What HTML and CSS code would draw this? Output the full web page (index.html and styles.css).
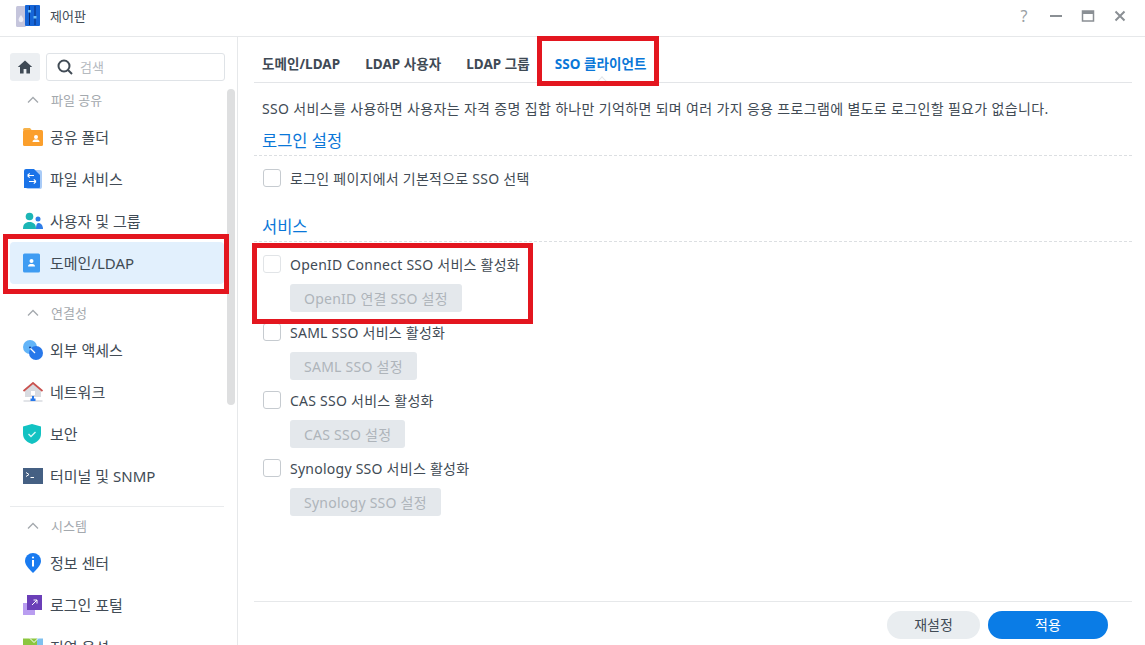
FILE: index.html
```html
<!DOCTYPE html>
<html lang="ko">
<head>
<meta charset="utf-8">
<title>제어판</title>
<link rel="stylesheet" href="styles.css">
</head>
<body>
<div class="window">
  <header class="titlebar">
    <svg class="app-icon" viewBox="0 0 24 22" width="24" height="22">
      <rect x="0" y="1" width="10" height="21" rx="1.5" fill="#c5c5dc"/>
      <path d="M5 10c1.6 2.2 2.4 3.4 2.4 4.8a2.4 2.4 0 0 1-4.800 0C2.600 13.400 3.400 12.200 5 10z" fill="#eeeef6"/>
      <rect x="9" y="0" width="15" height="21" rx="1" fill="#1565d8"/>
      <path d="M13.500 1v19M19 1v19" stroke="#0a2f78" stroke-width="1"/>
      <rect x="12" y="5" width="3" height="2.500" fill="#6fc0f5"/>
      <rect x="17.500" y="11" width="3" height="2.500" fill="#6fc0f5"/>
    </svg>
    <span class="app-title">제어판</span>
    <div class="win-controls">
      <span class="win-help">?</span>
      <svg viewBox="0 0 14 14" width="14" height="14"><path d="M1 7h12" stroke="#8a8f94" stroke-width="2"/></svg>
      <svg viewBox="0 0 14 14" width="14" height="14"><path d="M1.500 2h11v10h-11z" fill="none" stroke="#8a8f94" stroke-width="1.500"/><path d="M1 3.500h12" stroke="#8a8f94" stroke-width="3"/></svg>
      <svg viewBox="0 0 14 14" width="14" height="14"><path d="M2.500 2.500l9 9M11.500 2.500l-9 9" stroke="#8a8f94" stroke-width="2"/></svg>
    </div>
  </header>
  <div class="body">
    <aside class="sidebar">
      <div class="search-row">
        <button class="home-btn">
          <svg viewBox="0 0 16 16" width="16" height="16"><path d="M8 1.500L0.800 8H3v6.500h3.600V10h2.800v4.500H13V8h2.200z" fill="#3f4a55"/></svg>
        </button>
        <div class="search">
          <svg viewBox="0 0 16 16" width="16" height="16"><circle cx="7" cy="7" r="5.500" fill="none" stroke="#414b55" stroke-width="2"/><path d="M11 11l4 4" stroke="#414b55" stroke-width="2"/></svg>
          <span class="search-text">검색</span>
        </div>
      </div>
      <div class="nav">
        <section class="group">
          <div class="group-head"><svg class="chev" viewBox="0 0 12 8" width="12" height="8"><path d="M1 6.500l5-5 5 5" fill="none" stroke="#a4a9ae" stroke-width="1.300"/></svg>파일 공유</div>
          <div class="item"><svg class="ico" viewBox="0 0 20 18" width="20" height="18"><path d="M0 1.500A1.500 1.500 0 0 1 1.500 0H7l2 2.500H0z" fill="#f7b24a"/><rect y="2" width="20" height="16" rx="1.500" fill="#fb9f2c"/><circle cx="13" cy="9" r="2" fill="#fff"/><path d="M9.500 14c0-2 1.500-2.500 3.500-2.500s3.500.5 3.500 2.500z" fill="#fff"/></svg>공유 폴더</div>
          <div class="item"><svg class="ico" viewBox="0 0 20 20" width="20" height="20"><rect x="3" y="1" width="16" height="19" rx="2" fill="#a9cbf7"/><path d="M1 2a2 2 0 0 1 2-2h8l6 6v12a1 1 0 0 1-1 1H1z" fill="#1a73e8"/><path d="M11 6.500H4.500M4.500 6.500l2.200-2.200M4.500 6.500l2.200 2.200M6 12.500h7M13 12.500l-2.200-2.200M13 12.500l-2.200 2.200" fill="none" stroke="#fff" stroke-width="1.100"/></svg>파일 서비스</div>
          <div class="item"><svg class="ico" viewBox="0 0 20 18" width="20" height="18"><circle cx="6.500" cy="4.500" r="3.800" fill="#1cb5b5"/><path d="M0 17c0-5 2.500-7 6.500-7s6.500 2 6.500 7z" fill="#1cb5b5"/><circle cx="15" cy="7" r="2.500" fill="#2f7de8"/><path d="M13 17c0-3 .5-6 2.500-6S20 13 20 17z" fill="#2f7de8"/></svg>사용자 및 그룹</div>
          <div class="item active"><svg class="ico" viewBox="0 0 18 20" width="18" height="20"><rect width="17" height="19" y="0.500" rx="1.500" fill="#3f9cf2"/><circle cx="8.500" cy="8" r="2" fill="#fff"/><path d="M5 13.500c0-2 1.500-2.500 3.500-2.500s3.500.5 3.500 2.500z" fill="#fff"/></svg>도메인/LDAP</div>
        </section>
        <section class="group">
          <div class="group-head"><svg class="chev" viewBox="0 0 12 8" width="12" height="8"><path d="M1 6.500l5-5 5 5" fill="none" stroke="#a4a9ae" stroke-width="1.300"/></svg>연결성</div>
          <div class="item"><svg class="ico" viewBox="0 0 20 20" width="20" height="20"><circle cx="7" cy="7" r="7" fill="#62b4f8"/><circle cx="13" cy="13" r="7" fill="#2878ea"/><path d="M7 8l5 5" stroke="#fff" stroke-width="1.200"/><circle cx="7" cy="7.500" r="1" fill="#0e3f8f"/></svg>외부 액세스</div>
          <div class="item"><svg class="ico" viewBox="0 0 20 20" width="20" height="20"><path d="M2 8.500V15h16V8.500L10 2z" fill="#d9dbe0"/><path d="M0.500 9L10 1l9.500 8" fill="none" stroke="#c9524f" stroke-width="1.800"/><rect x="8" y="9" width="4" height="4" fill="#fff"/><path d="M10 14v3" stroke="#2878ea" stroke-width="2"/><path d="M0.500 19h19" stroke="#d9dbe0" stroke-width="1.500"/><rect x="7.500" y="16.500" width="5" height="2.500" fill="#2878ea"/></svg>네트워크</div>
          <div class="item"><svg class="ico" viewBox="0 0 18 20" width="18" height="20"><path d="M9 0l9 2.500V10c0 5-4 8.500-9 10-5-1.500-9-5-9-10V2.500z" fill="#12c2c2"/><path d="M5.500 10l2.500 2.500 4.500-4.500" fill="none" stroke="#d8f7f7" stroke-width="1.400"/></svg>보안</div>
          <div class="item"><svg class="ico" viewBox="0 0 20 16" width="20" height="16"><rect width="20" height="16" fill="#456083"/><path d="M3 4.500l3 2-3 2M7.500 9.500H11" fill="none" stroke="#fff" stroke-width="1"/></svg>터미널 및 SNMP</div>
        </section>
        <section class="group last">
          <div class="group-head"><svg class="chev" viewBox="0 0 12 8" width="12" height="8"><path d="M1 6.500l5-5 5 5" fill="none" stroke="#a4a9ae" stroke-width="1.300"/></svg>시스템</div>
          <div class="item"><svg class="ico" viewBox="0 0 20 20" width="20" height="20"><path d="M10 0a8 8 0 0 1 8 8c0 4-4 8-8 12-4-4-8-8-8-12a8 8 0 0 1 8-8z" fill="#1a7bf0"/><circle cx="10" cy="4.500" r="1.100" fill="#fff"/><rect x="9" y="7" width="2" height="6.500" fill="#fff"/></svg>정보 센터</div>
          <div class="item"><svg class="ico" viewBox="0 0 20 20" width="20" height="20"><rect x="0" y="8" width="12" height="12" fill="#b99df0"/><rect x="4" y="0" width="15" height="15" fill="#6b3fb8"/><path d="M9 10l5-5M10.500 5H14v3.500" fill="none" stroke="#fff" stroke-width="1"/></svg>로그인 포털</div>
          <div class="item"><svg class="ico" viewBox="0 -3 20 23" width="20" height="23"><rect width="14" height="20" fill="#8cc63f"/><path d="M14 0h6v20h-6z" fill="#7ec0ee"/><path d="M7 0l4 4 4-4" fill="none" stroke="#fff" stroke-width="1"/></svg>지역 옵션</div>
        </section>
      </div>
      <div class="scrollbar"></div>
    </aside>
    <main class="main">
      <nav class="tabs">
        <span class="tab">도메인/LDAP</span>
        <span class="tab">LDAP 사용자</span>
        <span class="tab">LDAP 그룹</span>
        <span class="tab current">SSO 클라이언트</span>
      </nav>
      <div class="content">
        <p class="desc">SSO 서비스를 사용하면 사용자는 자격 증명 집합 하나만 기억하면 되며 여러 가지 응용 프로그램에 별도로 로그인할 필요가 없습니다.</p>
        <h2 class="heading">로그인 설정</h2>
        <label class="check first"><span class="box"></span>로그인 페이지에서 기본적으로 SSO 선택</label>
        <h2 class="heading second">서비스</h2>
        <label class="check svc"><span class="box faint"></span>OpenID Connect SSO 서비스 활성화</label>
        <button class="config">OpenID 연결 SSO 설정</button>
        <label class="check svc next"><span class="box"></span>SAML SSO 서비스 활성화</label>
        <button class="config">SAML SSO 설정</button>
        <label class="check svc next"><span class="box"></span>CAS SSO 서비스 활성화</label>
        <button class="config">CAS SSO 설정</button>
        <label class="check svc next"><span class="box"></span>Synology SSO 서비스 활성화</label>
        <button class="config">Synology SSO 설정</button>
      </div>
      <footer class="footer">
        <button class="btn reset">재설정</button>
        <button class="btn apply">적용</button>
      </footer>
    </main>
  </div>
  <div class="mark mark-nav"></div>
  <div class="mark mark-tab"></div>
  <div class="mark mark-svc"></div>
</div>
</body>
</html>
```
FILE: styles.css
```css
* { box-sizing: border-box; }
html, body { margin: 0; height: 100%; overflow: hidden; background: #fff; }
body { font-family: "Noto Sans", "Noto Sans CJK KR", sans-serif; font-size: 14px; color: #3f4a55; }
button { font-family: inherit; border: 0; padding: 0; }

.window { position: relative; width: 1145px; height: 645px; overflow: hidden; display: flex; flex-direction: column; }

.titlebar { height: 37px; flex: none; display: flex; align-items: center; padding: 0 16px; border-bottom: 1px solid #e6e8ea; }
.app-icon { margin-bottom: 4px; }
.app-title { margin-left: 10px; font-size: 13px; margin-bottom: 6px; color: #414b55; }
.win-controls { margin-left: auto; margin-right: 2px; display: flex; align-items: center; gap: 18px; margin-bottom: 4px; }
.win-help { font-size: 16px; color: #9a9fa4; width: 14px; text-align: center; }

.body { flex: 1; display: flex; min-height: 0; }

.sidebar { position: relative; width: 238px; flex: none; border-right: 1px solid #e6e8ea; padding: 16px 12px 0 10px; overflow: hidden; }
.search-row { display: flex; gap: 6px; height: 28px; }
.home-btn { width: 30px; height: 28px; border-radius: 3px; background: #eceff2; display: flex; align-items: center; justify-content: center; }
.search { flex: 1; border: 1px solid #dfe3e7; border-radius: 3px; display: flex; align-items: center; padding-left: 10px; gap: 7px; }
.search-text { color: #b5babf; font-size: 13px; margin-top: -2px; }

.nav { margin: 9px 1px 0 0; }
.group { border-bottom: 1px solid #e9ebed; padding-bottom: 9px; margin-bottom: 9px; }
.group.last { border-bottom: 0; }
.group-head { height: 20px; display: flex; align-items: center; color: #a4a9ae; font-size: 13px; padding: 0 0 2px 17px; gap: 12px; }
.chev { flex: none; margin-top: 2px; }
.group-head + .item { margin-top: 6px; }
.item { position: relative; height: 42px; display: flex; align-items: center; font-size: 15px; color: #414b55; padding: 0 0 2px 40px; border-radius: 4px; }
.ico { position: absolute; left: 13px; top: 50%; transform: translateY(-50%); }
.item.active { background: #e2f0fd; }

.scrollbar { position: absolute; left: 227px; top: 52px; width: 8px; height: 316px; border-radius: 4px; background: #dedfe0; }

.main { flex: 1; min-width: 0; display: flex; flex-direction: column; padding: 0 13px 0 16px; }

.tabs { height: 46px; flex: none; display: flex; align-items: stretch; gap: 25px; padding-left: 8px; border-bottom: 1px solid #e3e5e8; font-size: 13.5px; letter-spacing: .05px; font-weight: 700; color: #3f4a55; }
.tab { display: flex; align-items: center; padding-top: 6px; position: relative; }
.tab.current { color: #0a77d8; }
.tab.current::after { content: ""; position: absolute; left: 50%; bottom: -4px; width: 7px; height: 7px; margin-left: -3px; background: #fff; border-top: 1px solid #e3e5e8; border-left: 1px solid #e3e5e8; transform: rotate(45deg); }

.content { flex: 1; padding: 0 0 0 8px; min-height: 0; }
.desc { margin: 16px 0 0; font-size: 14px; letter-spacing: .34px; line-height: 20px; color: #414b55; white-space: nowrap; }
.heading { margin: 11px 0 0 -8px; padding: 0 0 0 8px; height: 26px; line-height: 22px; font-size: 16.500px; font-weight: 400; color: #0a77d8; border-bottom: 1px dashed #dcdfe2; }
.heading.second { margin-top: 29px; }
.check { display: flex; align-items: center; height: 18px; gap: 9px; font-size: 14px; letter-spacing: .25px; color: #414b55; }
.check.first { margin-top: 13px; }
.check.svc { margin-top: 13px; }
.check.next { margin-top: 11px; }
.box { width: 18px; height: 18px; margin-left: 1px; border: 1px solid #c6cbd0; border-radius: 3px; background: #fff; flex: none; }
.box.faint { border-color: #e1e4e7; }
.config { display: block; margin: 11px 0 0 28px; height: 28px; padding: 0 14px; background: #e4e8ec; color: #aeb4ba; font-size: 14px; border-radius: 3px; letter-spacing: .25px; }

.footer { height: 44px; flex: none; border-top: 1px solid #e6e8ea; display: flex; justify-content: flex-end; align-items: flex-start; gap: 8px; padding: 9px 24px 0 0; }
.btn { height: 28px; border-radius: 14px; font-size: 14px; padding-bottom: 3px; }
.reset { width: 93px; background: #e9edf0; color: #414b55; }
.apply { width: 120px; background: #0a7ce6; color: #fff; }

.mark { position: absolute; border: 5px solid #e3161f; pointer-events: none; }
.mark-nav { left: 3px; top: 234px; width: 226px; height: 60px; }
.mark-tab { left: 537px; top: 36px; width: 122px; height: 50px; }
.mark-svc { left: 252px; top: 243px; width: 281px; height: 81px; }
```
